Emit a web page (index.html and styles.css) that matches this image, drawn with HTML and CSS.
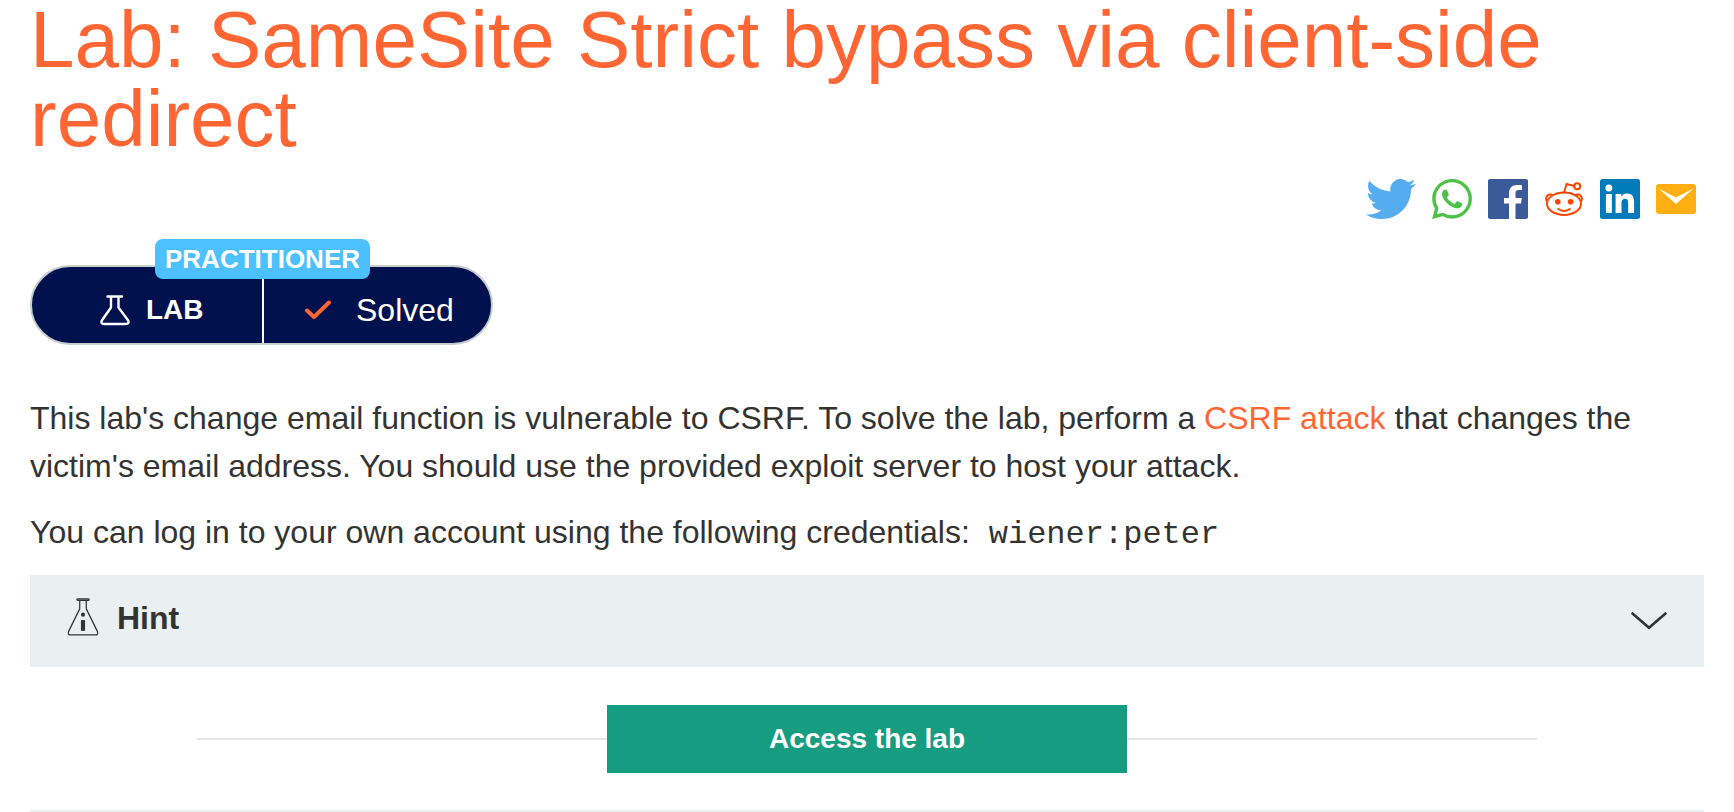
FILE: index.html
```html
<!DOCTYPE html>
<html lang="en">
<head>
<meta charset="utf-8">
<meta name="viewport" content="width=device-width, initial-scale=1">
<title>Lab: SameSite Strict bypass via client-side redirect</title>
<link rel="stylesheet" href="styles.css">
</head>
<body>
<main class="page">
  <h1 class="title">Lab: SameSite Strict bypass via client-side redirect</h1>

  <nav class="share" aria-label="Share">
    <a href="#twitter" aria-label="Twitter">
      <svg class="icon icon-wide" viewBox="0 0 24 19.5" preserveAspectRatio="none"><path fill="#55acee" d="M23.953 2.323a10 10 0 0 1-2.825.775 4.958 4.958 0 0 0 2.163-2.723c-.951.555-2.005.959-3.127 1.184a4.92 4.92 0 0 0-8.384 4.482C7.69 5.846 4.067 3.879 1.64.901a4.822 4.822 0 0 0-.666 2.475c0 1.71.87 3.213 2.188 4.096a4.904 4.904 0 0 1-2.228-.616v.06a4.923 4.923 0 0 0 3.946 4.827 4.996 4.996 0 0 1-2.212.085 4.936 4.936 0 0 0 4.604 3.417 9.867 9.867 0 0 1-6.102 2.105c-.39 0-.779-.023-1.17-.067a13.995 13.995 0 0 0 7.557 2.209c9.053 0 13.998-7.496 13.998-13.985 0-.21 0-.42-.015-.63A9.935 9.935 0 0 0 24 2.323z"/></svg>
    </a>
    <a href="#whatsapp" aria-label="WhatsApp">
      <svg class="icon" viewBox="0 0 24 24"><path fill="#4dc247" d="M17.472 14.382c-.297-.149-1.758-.867-2.03-.967-.273-.099-.471-.148-.67.15-.197.297-.767.966-.94 1.164-.173.199-.347.223-.644.075-.297-.15-1.255-.463-2.39-1.475-.883-.788-1.48-1.761-1.653-2.059-.173-.297-.018-.458.13-.606.134-.133.298-.347.446-.52.149-.174.198-.298.298-.497.099-.198.05-.371-.025-.52-.075-.149-.669-1.612-.916-2.207-.242-.579-.487-.5-.669-.51-.173-.008-.371-.01-.57-.01-.198 0-.52.074-.792.372-.272.297-1.04 1.016-1.04 2.479 0 1.462 1.065 2.875 1.213 3.074.149.198 2.096 3.2 5.077 4.487.709.306 1.262.489 1.694.625.712.227 1.36.195 1.871.118.571-.085 1.758-.719 2.006-1.413.248-.694.248-1.289.173-1.413-.074-.124-.272-.198-.57-.347m-5.421 7.403h-.004a9.87 9.87 0 0 1-5.031-1.378l-.361-.214-3.741.982.998-3.648-.235-.374a9.86 9.86 0 0 1-1.51-5.26c.001-5.45 4.436-9.884 9.888-9.884 2.64 0 5.122 1.03 6.988 2.898a9.825 9.825 0 0 1 2.893 6.994c-.003 5.45-4.437 9.884-9.885 9.884m8.413-18.297A11.815 11.815 0 0 0 12.05 0C5.495 0 .16 5.335.157 11.892c0 2.096.547 4.142 1.588 5.945L.057 24l6.305-1.654a11.882 11.882 0 0 0 5.683 1.448h.005c6.554 0 11.89-5.335 11.893-11.893a11.821 11.821 0 0 0-3.48-8.413Z"/></svg>
    </a>
    <a href="#facebook" aria-label="Facebook">
      <svg class="icon" viewBox="0 0 40 40"><rect width="40" height="40" rx="2" fill="#3b5a99"/><path fill="#fff" d="M21 40V24.500h-5V19h5v-4.500C21 9 24 6 29 6c2 0 3.500.1 5 .300V11h-3.500C28 11 27.500 12.500 27.500 14.500V19h6.300l-.8 5.500h-5.500V40z"/></svg>
    </a>
    <a href="#reddit" aria-label="Reddit">
      <svg class="icon" viewBox="0 0 40 40" fill="none" stroke="#ff4500" stroke-width="2"><ellipse cx="20" cy="24.700" rx="17" ry="11.200"/><path d="M3.300 22.500A4 4 0 1 1 9 16.800M36.700 22.500A4 4 0 1 0 31 16.800M20 13.500l2.600-8.500 7.600 2"/><circle cx="33.200" cy="7.300" r="3"/><path d="M13.500 29.500c4 3 9 3 13 0"/><g fill="#ff4500" stroke="none"><circle cx="13.800" cy="22.800" r="2.800"/><circle cx="26.600" cy="22.800" r="2.800"/></g></svg>
    </a>
    <a href="#linkedin" aria-label="LinkedIn">
      <svg class="icon" viewBox="0 0 24 24"><rect width="24" height="24" rx="1.500" fill="#007ab9"/><path fill="#fff" d="M20.447 20.452h-3.554v-5.569c0-1.328-.027-3.037-1.852-3.037-1.853 0-2.136 1.445-2.136 2.939v5.667H9.351V9h3.414v1.561h.046c.477-.9 1.637-1.850 3.370-1.850 3.601 0 4.267 2.370 4.267 5.455v6.286zM5.337 7.433a2.062 2.062 0 1 1 0-4.125 2.062 2.062 0 0 1 0 4.125zM7.119 20.452H3.555V9h3.564z"/></svg>
    </a>
    <a href="#email" aria-label="Email">
      <svg class="icon" viewBox="0 0 40 40"><rect y="5" width="40" height="30" rx="3" fill="#ffaf12"/><path fill="#fff" d="M2.500 9.500L20 18.500l17.500-9L20 25z"/></svg>
    </a>
  </nav>

  <div class="status">
    <span class="level">PRACTITIONER</span>
    <div class="status-part status-lab">
      <svg class="flask" viewBox="0 0 30 32" fill="none" stroke="#fff" stroke-width="2.400" stroke-linejoin="round" stroke-linecap="round"><path d="M7.500 2.500h14.500M11 3v10.500L1.800 26.500Q.6 30 4 30h22q3.400 0 2.200-3.500L18.500 13.500V3"/></svg>
      <strong>LAB</strong>
    </div>
    <div class="status-part status-solved">
      <svg class="tick" viewBox="0 0 28 22" fill="none" stroke="#ff6633" stroke-width="4" stroke-linecap="round" stroke-linejoin="round"><path d="M3 11.500l7 6.500L25 3.500"/></svg>
      <span>Solved</span>
    </div>
  </div>

  <p class="text">This lab's change email function is vulnerable to CSRF. To solve the lab, perform a <a href="#csrf">CSRF attack</a> that changes the victim's email address. You should use the provided exploit server to host your attack.</p>
  <p class="text">You can log in to your own account using the following credentials: <code>wiener:peter</code></p>

  <details class="hint">
    <summary>
      <svg class="hint-flask" viewBox="0 0 30 37" fill="none" stroke="#333332" stroke-width="1.200" stroke-linejoin="round"><path d="M9 1.500Q9 .8 10 .8h10q1 0 1 .8t-1 .8H10Q9 2.300 9 1.500zM11.800 2.600v8L1 32.500Q-.2 36 3 36h24q3.200 0 2-3.500L18.200 10.600v-8"/><g fill="#333332" stroke="none"><circle cx="15" cy="16.200" r="2"/><path d="M13 21.500h4V32h-4z"/></g></svg>
      <span class="hint-label">Hint</span>
      <svg class="chevron" viewBox="0 0 36 18" fill="none" stroke="#333332" stroke-width="2.600" stroke-linecap="round"><path d="M1.500 1.500L18 15.800 34.500 1.500"/></svg>
    </summary>
  </details>

  <div class="action"><a class="access" href="#lab">Access the lab</a></div>
</main>
</body>
</html>
```
FILE: styles.css
```css
* {
  box-sizing: border-box;
}

body {
  margin: 0;
  background: #fff;
  color: #333332;
  font: 32px/48px "Liberation Sans", Arial, sans-serif;
}

.page {
  margin: 0 30px;
  border-bottom: 2px solid #eaeff2;
}

.title {
  margin: 0;
  color: #ff6633;
  font-size: 80px;
  font-weight: 400;
  line-height: 79px;
}

.share {
  display: flex;
  justify-content: flex-end;
  gap: 16px;
  padding: 21px 8px 0;
}

.share a {
  display: flex;
}

.icon {
  width: 40px;
  height: 40px;
}

.icon-wide {
  width: 50px;
}

.status {
  position: relative;
  display: inline-grid;
  grid-template-columns: 230px 229px;
  height: 80px;
  margin-top: 46px;
  border: 2px solid #c5cdcd;
  border-radius: 40px;
  background: #00114d;
  color: #fff;
  vertical-align: top;
}

.level {
  position: absolute;
  top: -28px;
  left: 123px;
  padding: 0 10px;
  border-radius: 8px;
  background: #4dc1ff;
  font-size: 26px;
  font-weight: 700;
  line-height: 40px;
}

.status-part {
  display: flex;
  align-items: center;
  padding-top: 10px;
}

.status-lab {
  gap: 16px;
  padding-left: 68px;
  font-size: 28px;
}

.status-solved {
  gap: 24px;
  padding-left: 40px;
  border-left: 2px solid #fff;
}

.flask {
  width: 30px;
  height: 32px;
}

.tick {
  width: 28px;
  height: 22px;
}

.text {
  margin: 18px 0;
}

.status + .text {
  margin-top: 49px;
}

.text a {
  color: #ff6633;
  text-decoration: none;
}

.text code {
  padding-left: 10px;
  font: 32px/32px "Liberation Mono", "Courier New", monospace;
}

.hint {
  margin-top: 19px;
  background: #eaeff2;
}

.hint summary {
  display: flex;
  align-items: center;
  padding: 22px 37px;
  list-style: none;
  cursor: pointer;
}

.hint-flask {
  width: 32px;
  height: 38px;
  margin: 0 18px 8px 0;
}

.hint-label {
  padding-bottom: 6px;
  font-weight: 700;
  line-height: 42px;
}

.chevron {
  width: 36px;
  height: 18px;
  margin-left: auto;
}

.action {
  display: flex;
  align-items: center;
  margin: 38px 10% 0;
  padding-bottom: 37px;
}

.action::before,
.action::after {
  content: "";
  flex: 1;
  height: 2px;
  background: #e6e6e6;
}

.access {
  padding: 0 162px;
  background: #169c81;
  color: #fff;
  font-size: 28px;
  font-weight: 700;
  line-height: 68px;
  text-align: center;
  text-decoration: none;
}
```
